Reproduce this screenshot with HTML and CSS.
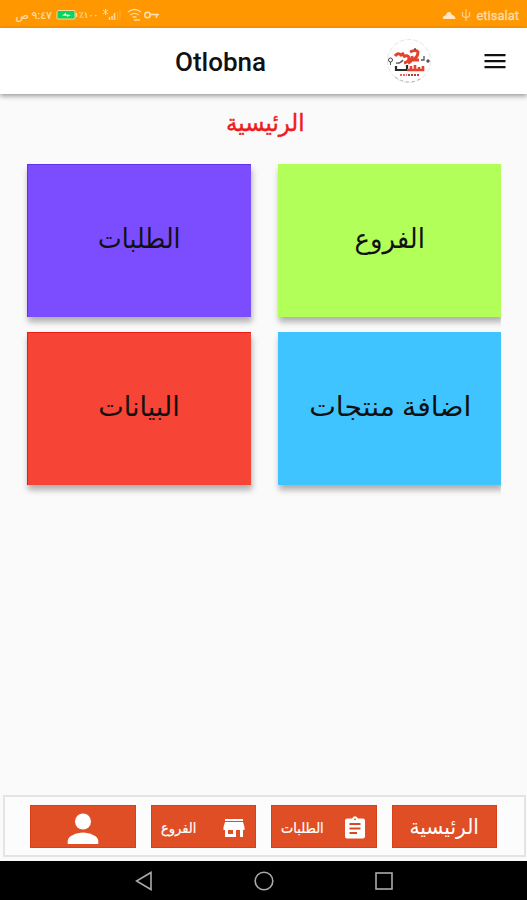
FILE: index.html
```html
<!DOCTYPE html>
<html lang="ar">
<head>
<meta charset="utf-8">
<title>Otlobna</title>
<link rel="stylesheet" href="styles.css">
</head>
<body>
<div class="phone">
  <div class="status">
    <div class="status-left">
      <span class="time" dir="rtl">٩:٤٧ ص</span>
      <svg class="battery" width="24" height="12" viewBox="0 0 24 12"><rect x="2" y="1.500" width="18" height="8.500" rx="1" fill="#0bd45c" stroke="#ffd79b"/><path d="M7 6.500l4-2.700v1.600l5 .5-4 2v-1.200z" fill="#eaffdf"/><path d="M21.500 4v4" stroke="#ffd79b" stroke-width="1.500"/></svg>
      <span class="percent">٪١٠٠</span>
      <svg width="22" height="14" viewBox="0 0 22 14" fill="none" stroke="#ffd9a0"><path d="M1 2l5 4M6 2L1 6M3.500 1v6" stroke-width="1"/><path d="M7.500 12V9M10 12V8M12.500 12V5" stroke-width="1.600"/><path d="M15.500 12V4M18 12V2" opacity=".35"/></svg>
      <svg class="wifi" width="15" height="14" viewBox="0 0 15 14" fill="none" stroke="#ffd9a0" stroke-width="1.400"><path d="M1 4q6.500-5 13 0M3.300 7q4.200-3.300 8.400 0M5.500 9.500q2-1.500 4 0M7 12h6"/></svg>
      <svg width="17" height="12" viewBox="0 0 17 12" fill="none" stroke="#ffe0b2" stroke-width="1.600"><circle cx="4.500" cy="6" r="2.700"/><path d="M7.200 5.500H16M13.500 5.500v3.500"/></svg>
    </div>
    <div class="status-right">
      <svg width="14" height="10" viewBox="0 0 14 10" fill="#ffe6c2"><path d="M1 9q-1-3 2.500-3.500Q5 1.500 7.500 2q2 .5 2.500 3 3 .3 3.500 4z"/></svg>
      <svg width="10" height="14" viewBox="0 0 10 14" fill="none" stroke="#ffd08a" stroke-width="1.200"><path d="M5 1v12M1.500 4v4L5 10l3.500-2V4"/></svg>
      <span>etisalat</span>
    </div>
  </div>

  <header class="appbar">
    <h1>Otlobna</h1>
    <svg class="logo" width="46" height="46" viewBox="0 0 46 46">
      <circle cx="23" cy="23" r="21.500" fill="#fff" stroke="#e6e6e6" stroke-dasharray="5 2"/>
      <path d="M9 39q14 10 28 0" fill="none" stroke="#aaa" stroke-dasharray="3 3"/>
      <circle cx="4.500" cy="22" r="2" fill="#fff" stroke="#444"/><path d="M4.500 24v3" stroke="#555"/><circle cx="42" cy="23" r="1.700" fill="#555"/>
      <path d="M9 18q3-4 6-1l3-2M17 19q5-3 6 1 0 4-5 5M26 18q1 5-4 7M24 14q6-3 8 0 0 5-5 8h6" fill="none" stroke="#e3422c" stroke-width="3"/>
      <path d="M10 25q4 1 7-3M35 22h3v-4M28 11h2" fill="none" stroke="#555" stroke-width="1.300"/>
      <path d="M10 28v4h11v-5" fill="none" stroke="#292929" stroke-width="2.200"/>
      <path d="M21 32h16v-4M25 28v4M29 27v5M33 29v3" fill="none" stroke="#e3422c" stroke-width="2.600"/>
      <path d="M14 37h7" stroke="#e66" stroke-width="2.200" stroke-dasharray="2 1"/><path d="M22 37h12" stroke="#b53f38" stroke-width="2.200" stroke-dasharray="2 1"/>
    </svg>
    <svg class="menu" width="22" height="16" viewBox="0 0 22 16" stroke="#111" stroke-width="2.200"><path d="M.5 2.200h21M.5 8.200h21M.5 14.200h21"/></svg>
  </header>

  <main>
    <h2><span class="w-title">الرئيسية</span></h2>
    <div class="grid">
      <div class="card purple"><span class="w-orders">الطلبات</span></div>
      <div class="card green"><span class="w-branches">الفروع</span></div>
      <div class="card red"><span class="w-data">البيانات</span></div>
      <div class="card blue"><span class="w-add">اضافة منتجات</span></div>
    </div>
  </main>

  <nav class="tabs">
    <div class="tab person"><svg width="32" height="32" viewBox="0 0 32 32" fill="#fff"><circle cx="16" cy="8.500" r="8"/><path d="M.7 31v-3c0-5 9-8.500 15.300-8.500S31.300 23 31.300 28v3z"/></svg></div>
    <div class="tab pair"><span class="w-tab1">الفروع</span><svg width="22" height="22" viewBox="0 0 22 22"><path fill="#fff" d="M2 2h18v2H2zM2 5h18l1.500 5v3H20v7h-3v-7h-4v7H2v-7H.5v-3zM5 13v4h5v-4z" fill-rule="evenodd"/></svg></div>
    <div class="tab pair"><span class="w-tab2">الطلبات</span><svg width="22" height="24" viewBox="0 0 22 24"><path fill="#fff" d="M3 2.500h5q3-4.500 6 0h5q2 0 2 2v16q0 2-2 2H3q-2 0-2-2v-16q0-2 2-2z"/><path d="M5.500 8h11M5.500 12.500h11M5.500 17h7.500" stroke="#d84b22" stroke-width="2"/><circle cx="11" cy="3.300" r=".9" fill="#d84b22"/></svg></div>
    <div class="tab"><span class="w-home">الرئيسية</span></div>
  </nav>

  <div class="sysnav">
    <svg width="18" height="20" viewBox="0 0 18 20"><path d="M16 1.500v17L1.500 10z"/></svg>
    <svg width="20" height="20" viewBox="0 0 20 20"><circle cx="10" cy="10" r="8.800"/></svg>
    <svg width="18" height="18" viewBox="0 0 18 18"><rect x="1" y="1" width="16" height="16"/></svg>
  </div>
</div>
</body>
</html>
```
FILE: styles.css
```css
* { box-sizing: border-box; }
body { margin: 0; background: #fafafa; font-family: Roboto, "DejaVu Sans", sans-serif; }
svg { display: block; flex: none; }
.phone { width: 527px; height: 900px; display: flex; flex-direction: column; overflow: hidden; }

.status { height: 28px; flex: none; background: #ff9800; display: flex; justify-content: space-between; align-items: center; padding: 2px 8px 0 10px; color: #ffdcab; font-size: 12px; }
.status-left, .status-right { display: flex; align-items: center; }
.time { width: 42px; white-space: nowrap; font-size: 11px; -webkit-text-stroke: .2px; }
.battery { margin-left: 3px; }
.percent { width: 23px; font-size: 9px; white-space: nowrap; -webkit-text-stroke: .2px; }
.wifi { margin: 0 1px 0 3px; }
.status-right { gap: 5px; font-size: 13px; -webkit-text-stroke: .3px; }

.appbar { height: 66px; flex: none; background: #fff; display: flex; align-items: center; padding: 0 21px 0 175px; box-shadow: 0 2px 5px rgba(0,0,0,.4); }
h1 { margin: 0; padding-top: 1px; width: 211px; font-size: 26px; font-weight: 500; color: #111; }
.menu { margin-left: auto; }

main { flex: 1; }
h2 { margin: 0; height: 70px; display: flex; justify-content: center; padding: 15px 0 0 3px; font-size: 24px; line-height: 28px; font-weight: 400; color: #ee1c1c; -webkit-text-stroke: .4px; }
.grid { display: grid; grid-template-columns: 224px 224px; grid-auto-rows: 153px; gap: 15px 27px; padding-left: 27px; width: 501px; height: 335px; overflow-x: clip; }
.card { display: flex; align-items: center; justify-content: center; font-size: 27px; line-height: 34px; padding-bottom: 4px; color: #111; box-shadow: 1px 5px 6px rgba(0,0,0,.3); white-space: nowrap; }
.purple { background: #7c4dff; box-shadow: inset 1px 1px #6330ef, 1px 5px 6px rgba(0,0,0,.3); }
.green { background: #b2ff59; }
.red { background: #f64437; box-shadow: inset 1px 1px #e91c10, 1px 5px 6px rgba(0,0,0,.3); }
.blue { background: #40c4ff; }

/* Arabic label proportions */
.w-title { transform: scaleX(.95); }
.w-orders { transform: scaleX(.93); }
.w-branches { transform: scaleX(.96); }
.w-add { transform: scaleX(1.05); }
.w-home { transform: scaleX(.96); }
.w-tab1, .w-tab2 { transform: scaleX(.93); transform-origin: left; }

.tabs { flex: none; height: 62px; width: 523px; margin: 0 0 4px 3px; border: 2px solid #e4e4e4; background: #fcfcfc; display: flex; gap: 15px; padding: 8px 0 0 25px; }
.tab { width: 105.500px; height: 43px; background: #df4e24; border: 1px solid #d8401a; display: flex; align-items: center; justify-content: center; color: #fff; font-size: 21px; white-space: nowrap; }
.person { padding-top: 5px; }
.pair { justify-content: space-between; padding: 2px 10px 0 9px; font-size: 14px; -webkit-text-stroke: .2px; }

.sysnav { height: 39px; flex: none; background: #000; display: flex; align-items: center; padding-left: 135px; gap: 101px; }
.sysnav svg { fill: none; stroke: #aaa; stroke-width: 1.600; }
```
